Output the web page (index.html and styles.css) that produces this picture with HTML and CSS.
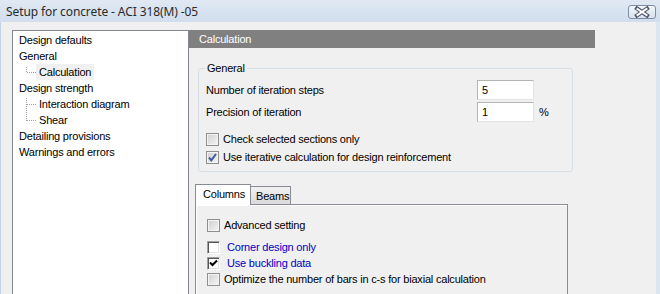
FILE: index.html
```html
<!DOCTYPE html>
<html>
<head>
<meta charset="utf-8">
<link rel="stylesheet" href="styles.css">
</head>
<body>
<div class="window">
  <div class="titlebar">
    <span class="title">Setup for concrete - ACI 318(M) -05</span>
    <span class="close">
      <svg width="28" height="14" viewBox="0 0 28 14">
        <defs>
          <linearGradient id="cg" x1="0" y1="0" x2="0" y2="1">
            <stop offset="0" stop-color="#f4f7fb"/>
            <stop offset="1" stop-color="#d6e0ec"/>
          </linearGradient>
        </defs>
        <rect x="0.5" y="0.5" width="27" height="13" rx="2.5" fill="url(#cg)" stroke="#7f8ca3"/>
        <path d="M9 3.5 L19 10.5 M19 3.5 L9 10.5" stroke="#4b5568" stroke-width="4" stroke-linecap="square"/>
        <path d="M9.5 4 L18.5 10 M18.5 4 L9.5 10" stroke="#ffffff" stroke-width="2" stroke-linecap="square"/>
      </svg>
    </span>
  </div>
  <div class="client">
    <div class="tree">
      <div class="item">Design defaults</div>
      <div class="item">General</div>
      <div class="item child"><span class="conn first last"></span><span class="txt sel">Calculation</span></div>
      <div class="item">Design strength</div>
      <div class="item child"><span class="conn mid"></span><span class="txt">Interaction diagram</span></div>
      <div class="item child"><span class="conn last"></span><span class="txt">Shear</span></div>
      <div class="item">Detailing provisions</div>
      <div class="item">Warnings and errors</div>
    </div>
    <div class="main">
      <div class="header">Calculation</div>
      <fieldset class="group">
        <legend>General</legend>
        <div class="field">
          <span class="lbl">Number of iteration steps</span>
          <span class="input">5</span>
        </div>
        <div class="field">
          <span class="lbl">Precision of iteration</span>
          <span class="input">1</span>
          <span class="unit">%</span>
        </div>
        <div class="checks">
          <div class="chk"><span class="box themed"></span><span>Check selected sections only</span></div>
          <div class="chk"><span class="box themed"><svg width="11" height="11" viewBox="0 0 11 11"><path d="M2 5.5 L4.3 8.3 L9 2" fill="none" stroke="#3f5a9e" stroke-width="2"/></svg></span><span>Use iterative calculation for design reinforcement</span></div>
        </div>
      </fieldset>
      <div class="tabs">
        <div class="tabstrip">
          <span class="tab active">Columns</span>
          <span class="tab inactive">Beams</span>
        </div>
        <div class="tabpanel">
          <div class="prow"><span class="box themed"></span><span>Advanced setting</span></div>
          <div class="prow gap"><span class="box classic"></span><span class="blue">Corner design only</span></div>
          <div class="prow"><span class="box classic"><svg width="9" height="9" viewBox="0 0 9 9"><path d="M1 3.5 L3.5 6 L8 1.5" fill="none" stroke="#000" stroke-width="2"/></svg></span><span class="blue">Use buckling data</span></div>
          <div class="prow"><span class="box themed"></span><span>Optimize the number of bars in c-s for biaxial calculation</span></div>
        </div>
      </div>
    </div>
  </div>
</div>
</body>
</html>
```
FILE: styles.css
```css
html, body {
  margin: 0;
  padding: 0;
}
body {
  width: 660px;
  height: 294px;
  overflow: hidden;
  background: #dce6f1;
  font-family: "Liberation Sans", Arial, sans-serif;
  font-size: 11px;
  letter-spacing: -0.2px;
  color: #000;
}
.window {
  width: 660px;
  height: 294px;
  display: flex;
  flex-direction: column;
}
.titlebar {
  height: 22px;
  flex: none;
  box-sizing: border-box;
  display: flex;
  align-items: center;
  justify-content: space-between;
  padding: 0 4px 0 6px;
  background: linear-gradient(#e0e9f3, #d1deed);
}
.title {
  font-family: "Noto Sans", "Liberation Sans", sans-serif;
  font-size: 12px;
  color: #2a2a2a;
  letter-spacing: -0.1px;
}
.close {
  display: flex;
  margin-top: 2px;
}
.client {
  flex: 1;
  width: 656px;
  box-sizing: border-box;
  display: flex;
  align-items: flex-start;
  background: #f0f0f0;
  border-left: 1px solid #c3d3e5;
  padding: 8px 0 0 11px;
  overflow: hidden;
}
.tree {
  width: 177px;
  height: 300px;
  flex: none;
  box-sizing: border-box;
  background: #fff;
  border: 1px solid #828790;
  padding-top: 1px;
}
.item {
  height: 16px;
  line-height: 16px;
  padding-left: 6px;
  display: flex;
  align-items: center;
  white-space: nowrap;
}
.item.child {
  padding-left: 13px;
}
.conn {
  width: 10px;
  height: 16px;
  flex: none;
  background:
    repeating-linear-gradient(to right, #a0a0a0 0 1px, transparent 1px 2px) 1px 8px / 9px 1px no-repeat,
    repeating-linear-gradient(to bottom, #a0a0a0 0 1px, transparent 1px 2px) 0 0 / 1px 9px no-repeat;
}
.conn.first {
  background:
    repeating-linear-gradient(to right, #a0a0a0 0 1px, transparent 1px 2px) 1px 8px / 9px 1px no-repeat,
    repeating-linear-gradient(to bottom, #a0a0a0 0 1px, transparent 1px 2px) 0 3px / 1px 6px no-repeat;
}
.conn.mid {
  background:
    repeating-linear-gradient(to right, #a0a0a0 0 1px, transparent 1px 2px) 1px 8px / 9px 1px no-repeat,
    repeating-linear-gradient(to bottom, #a0a0a0 0 1px, transparent 1px 2px) 0 2px / 1px 14px no-repeat;
}
.txt {
  padding: 0 3px;
  height: 16px;
  line-height: 16px;
}
.txt.sel {
  background: #f0f0f0;
}
.main {
  flex: 1;
  display: flex;
  flex-direction: column;
  align-items: flex-start;
}
.header {
  width: 406px;
  height: 18px;
  line-height: 18px;
  box-sizing: border-box;
  background: #808080;
  color: #fff;
  padding-left: 10px;
}
.group {
  margin: 14px 0 0 9px;
  width: 375px;
  box-sizing: border-box;
  border: 1px solid #d5dfe5;
  border-radius: 3px;
  padding: 5px 0 5px 7px;
}
.group legend {
  padding: 0 2px;
  margin-left: -1px;
  line-height: 13px;
}
.field {
  display: flex;
  align-items: center;
  height: 20px;
  margin-bottom: 2px;
}
.lbl {
  width: 271px;
  flex: none;
}
.input {
  width: 57px;
  height: 20px;
  box-sizing: border-box;
  background: #fff;
  border: 1px solid;
  border-color: #b5b5b5 #e3e3e3 #e3e3e3 #b5b5b5;
  padding-left: 4px;
  line-height: 18px;
}
.unit {
  margin-left: 5px;
}
.checks {
  margin-top: 8px;
}
.chk {
  height: 18px;
  display: flex;
  align-items: center;
}
.box {
  width: 13px;
  height: 13px;
  flex: none;
  box-sizing: border-box;
  display: flex;
  align-items: center;
  justify-content: center;
}
.box.themed {
  border: 1px solid #8f8f8f;
  background: linear-gradient(135deg, #cfcfcf, #f6f6f6);
  box-shadow: inset 0 0 0 1px #f4f4f4;
  margin-right: 4px;
}
.box.classic {
  background: #fff;
  border: 1px solid;
  border-color: #a0a0a0 #fff #fff #a0a0a0;
  box-shadow: inset 1px 1px 0 #555, inset -1px -1px 0 #e3e3e3;
  margin-right: 7px;
}
.tabs {
  margin: 12px 0 0 6px;
}
.tabstrip {
  display: flex;
  align-items: flex-end;
  height: 20px;
}
.tab {
  box-sizing: border-box;
  border: 1px solid #898c95;
  border-bottom: none;
}
.tab.active {
  width: 56px;
  height: 21px;
  margin-bottom: -1px;
  background: #fff;
  padding-left: 7px;
  line-height: 19px;
  position: relative;
  z-index: 1;
}
.tab.inactive {
  width: 41px;
  height: 18px;
  margin-left: -1px;
  background: linear-gradient(#f2f2f2, #dadada);
  padding-left: 5px;
  line-height: 18px;
}
.tabpanel {
  width: 373px;
  height: 120px;
  box-sizing: border-box;
  border: 1px solid #898c95;
  box-shadow: inset 1px 1px 0 #fff;
  background: #f0f0f0;
  padding: 12px 0 0 11px;
}
.prow {
  height: 16px;
  display: flex;
  align-items: center;
  white-space: nowrap;
}
.prow.gap {
  margin-top: 6px;
}
.blue {
  color: #0000c8;
}
```
